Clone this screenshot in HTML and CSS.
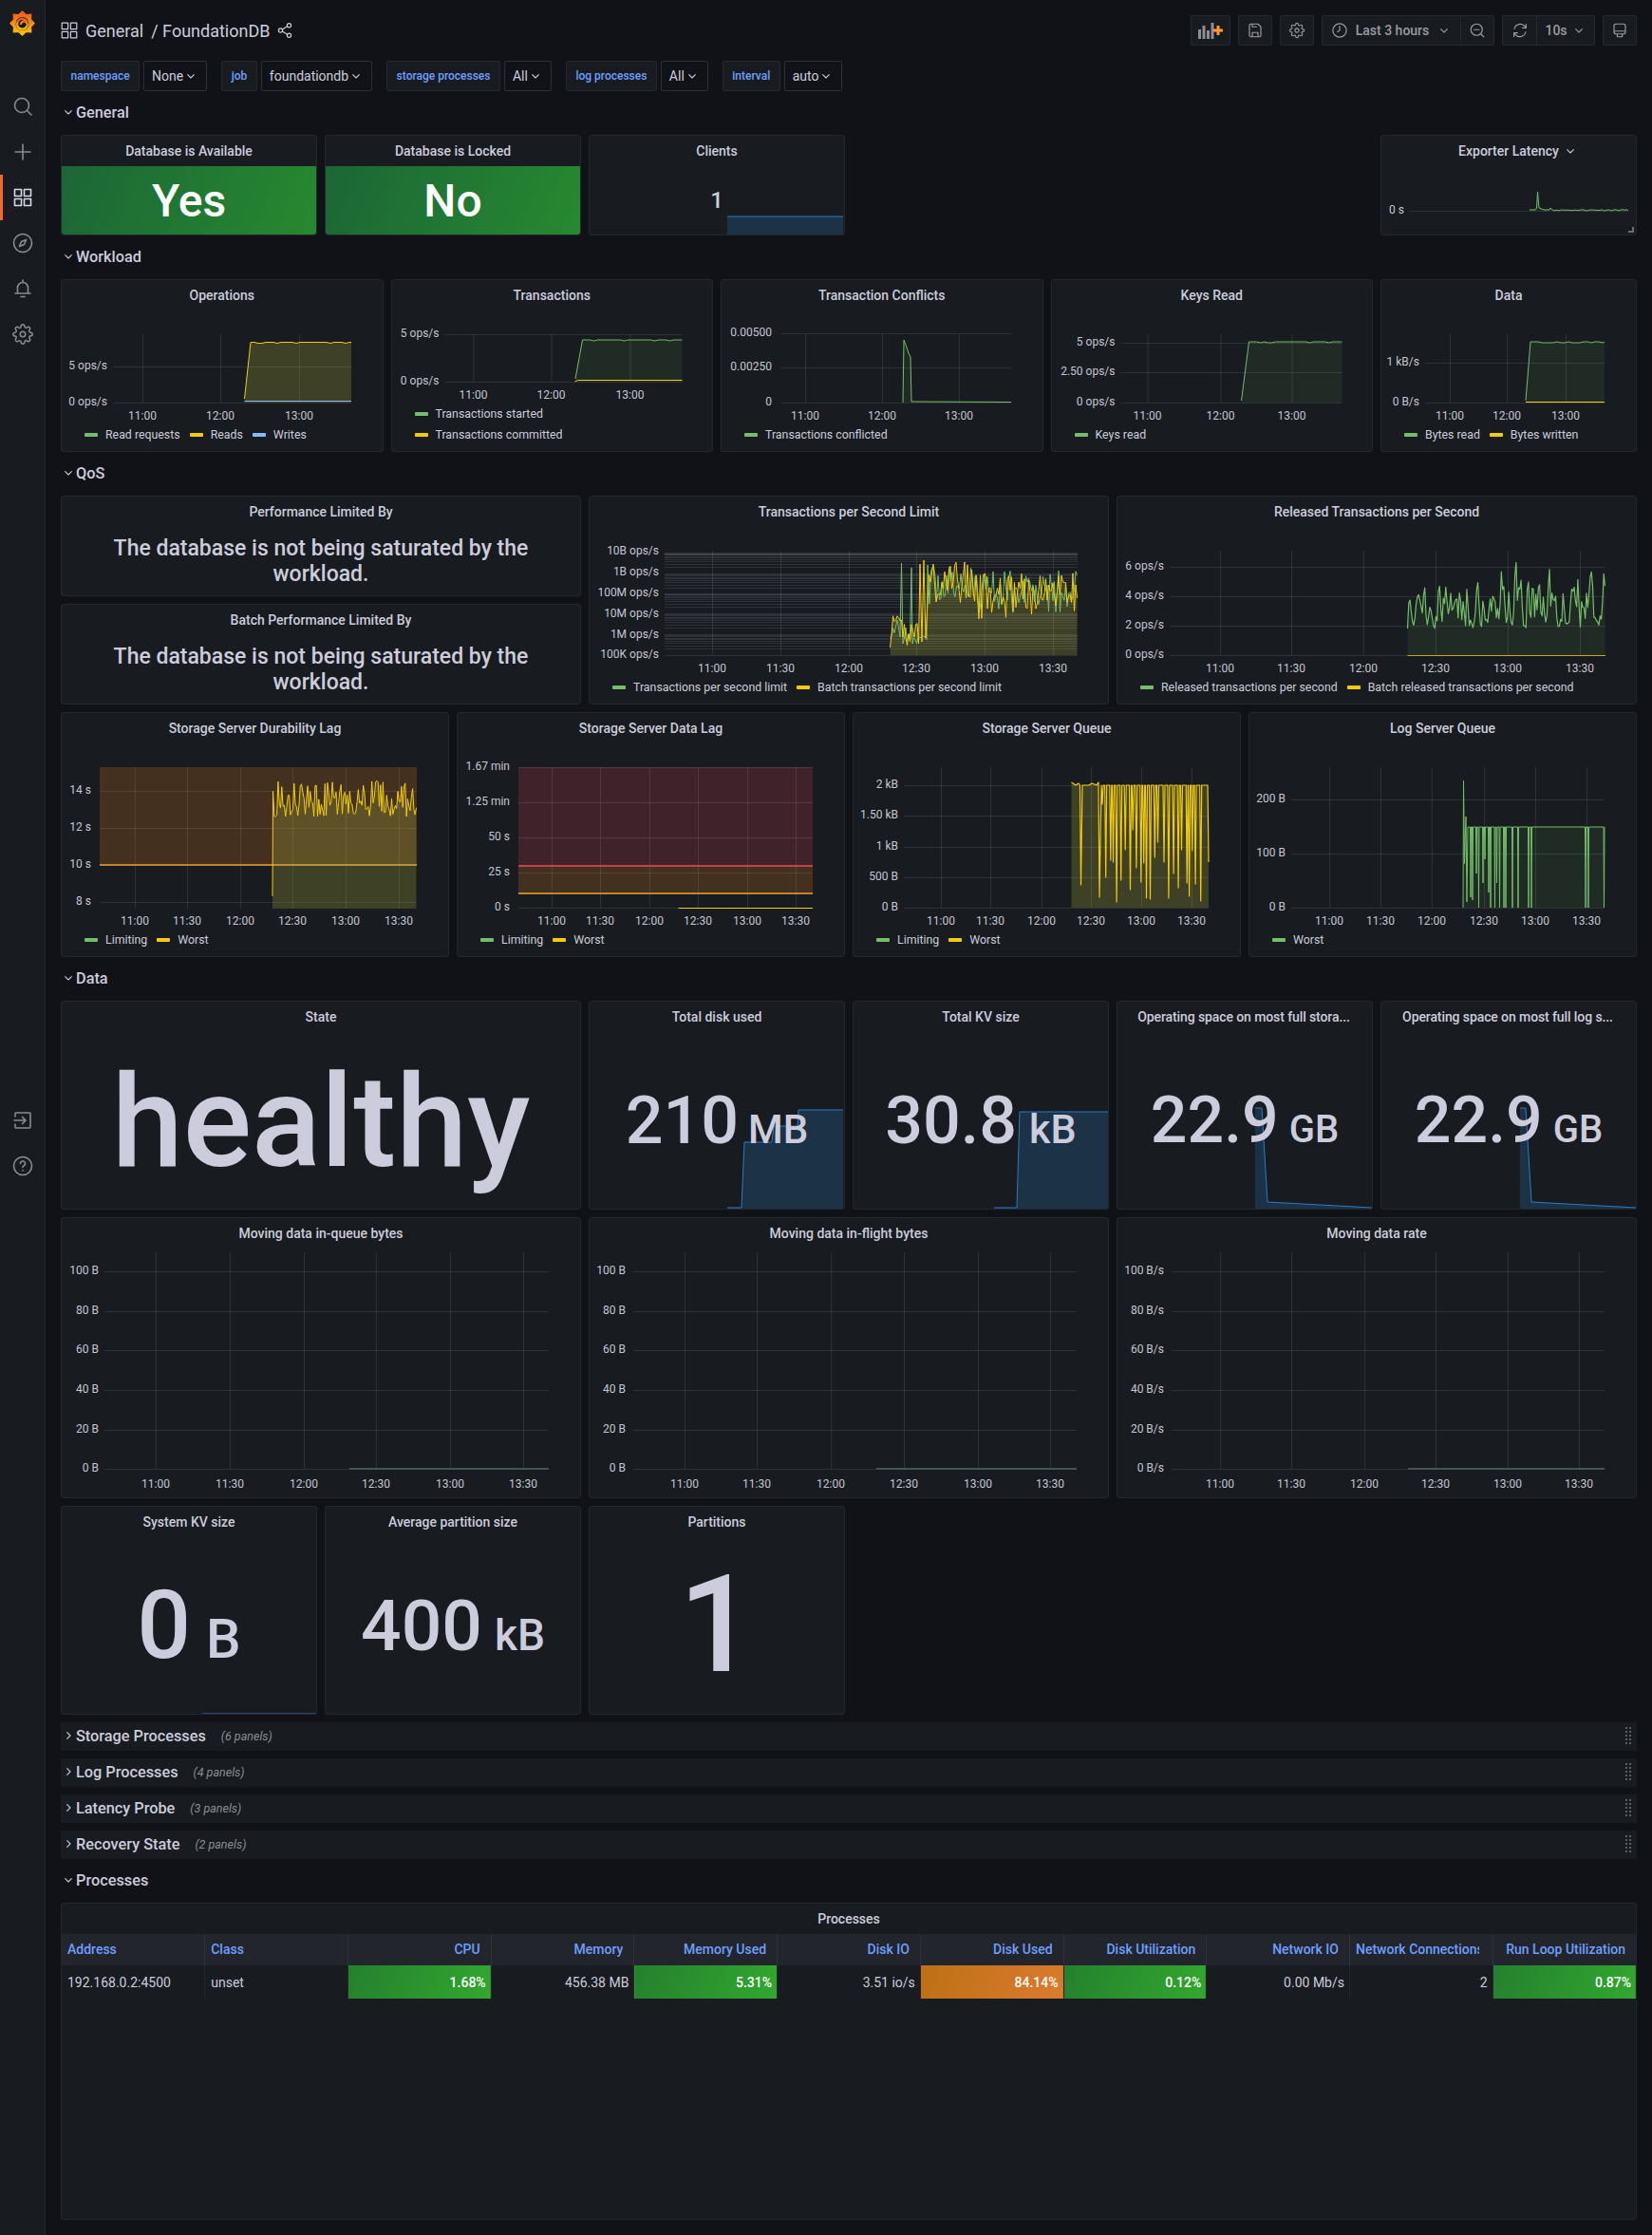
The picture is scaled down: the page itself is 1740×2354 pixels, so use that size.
FILE: index.html
```html
<!DOCTYPE html>
<html>
<head>
  <title>General / FoundationDB - Grafana</title>
  <link rel="stylesheet" href="styles.css">
</head>
<body>

<svg class="sprite" width="0" height="0">
  <defs>
    <linearGradient id="logoFill" x1="0" y1="0" x2="0" y2="1">
      <stop offset="0" stop-color="#f0561f"/>
      <stop offset="1" stop-color="#fbc60a"/>
    </linearGradient>
  </defs>
  <symbol id="i-search" viewBox="0 0 24 24"><circle cx="11" cy="11" r="7.5"/><path d="M16.5 16.5L21 21"/></symbol>
  <symbol id="i-plus" viewBox="0 0 24 24"><path d="M12 4v16M4 12h16"/></symbol>
  <symbol id="i-apps" viewBox="0 0 24 24"><rect x="3.5" y="3.5" width="7" height="7"/><rect x="13.5" y="3.5" width="7" height="7"/><rect x="3.5" y="13.5" width="7" height="7"/><rect x="13.5" y="13.5" width="7" height="7"/></symbol>
  <symbol id="i-compass" viewBox="0 0 24 24"><circle cx="12" cy="12" r="9.5"/><path d="M15.5 8.5l-2 5-5 2 2-5z"/></symbol>
  <symbol id="i-bell" viewBox="0 0 24 24"><path d="M6.5 17v-6a5.5 5.5 0 0 1 11 0v6M4 17h16M10 20.5h4M12 3v2"/></symbol>
  <symbol id="i-cog" viewBox="-1 -1 26 26"><circle cx="12" cy="12" r="3"/><path d="M19.4 15a1.65 1.65 0 0 0 .33 1.82l.06.06a2 2 0 0 1 0 2.83 2 2 0 0 1-2.83 0l-.06-.06a1.65 1.65 0 0 0-1.82-.33 1.65 1.65 0 0 0-1 1.51V21a2 2 0 0 1-2 2 2 2 0 0 1-2-2v-.09A1.65 1.65 0 0 0 9 19.4a1.65 1.65 0 0 0-1.82.33l-.06.06a2 2 0 0 1-2.83 0 2 2 0 0 1 0-2.83l.06-.06a1.65 1.65 0 0 0 .33-1.82 1.65 1.65 0 0 0-1.51-1H3a2 2 0 0 1-2-2 2 2 0 0 1 2-2h.09A1.65 1.65 0 0 0 4.6 9a1.65 1.65 0 0 0-.33-1.82l-.06-.06a2 2 0 0 1 0-2.83 2 2 0 0 1 2.83 0l.06.06a1.65 1.65 0 0 0 1.82.33H9a1.65 1.65 0 0 0 1-1.51V3a2 2 0 0 1 2-2 2 2 0 0 1 2 2v.09a1.65 1.65 0 0 0 1 1.51 1.65 1.65 0 0 0 1.82-.33l.06-.06a2 2 0 0 1 2.83 0 2 2 0 0 1 0 2.83l-.06.06a1.65 1.65 0 0 0-.33 1.82V9a1.65 1.65 0 0 0 1.51 1H21a2 2 0 0 1 2 2 2 2 0 0 1-2 2h-.09a1.65 1.65 0 0 0-1.51 1z"/></symbol>
  <symbol id="i-signin" viewBox="0 0 24 24"><path d="M4 8V5a1 1 0 0 1 1-1h14a1 1 0 0 1 1 1v14a1 1 0 0 1-1 1H5a1 1 0 0 1-1-1v-3M3 12h12M11.5 8.5L15 12l-3.5 3.5"/></symbol>
  <symbol id="i-help" viewBox="0 0 24 24"><circle cx="12" cy="12" r="9.5"/><path d="M9.5 9.5a2.5 2.5 0 1 1 3.6 2.2c-.8.4-1.1.9-1.1 1.8M12 16.5v.5"/></symbol>
  <symbol id="i-share" viewBox="0 0 24 24"><circle cx="18" cy="5" r="2.8"/><circle cx="6" cy="12" r="2.8"/><circle cx="18" cy="19" r="2.8"/><path d="M8.5 10.6l7-4.2M8.5 13.4l7 4.2"/></symbol>
  <symbol id="i-save" viewBox="0 0 24 24"><path d="M7 3h9l4 4v12a2 2 0 0 1-2 2H6a2 2 0 0 1-2-2V5a2 2 0 0 1 2-2zM8 21v-6h8v6M8 3v4h6"/></symbol>
  <symbol id="i-clock" viewBox="0 0 24 24"><circle cx="12" cy="12" r="9.5"/><path d="M12 6v6l-3 2"/></symbol>
  <symbol id="i-zoomout" viewBox="0 0 24 24"><circle cx="11" cy="11" r="8"/><path d="M17 17l4 4M7.5 11h7"/></symbol>
  <symbol id="i-sync" viewBox="0 0 24 24"><path d="M4 10a8.5 8.5 0 0 1 15-3.5l1.5 2M20 14a8.5 8.5 0 0 1-15 3.5L3.5 15.5M20.5 3.5v5h-5M3.5 20.5v-5h5"/></symbol>
  <symbol id="i-tv" viewBox="0 0 24 24"><path d="M7 3h10a3 3 0 0 1 3 3v8a3 3 0 0 1-3 3H7a3 3 0 0 1-3-3V6a3 3 0 0 1 3-3zM4 13h16M8.5 17v4h7v-4"/></symbol>
  <symbol id="i-down" viewBox="0 0 24 24"><path d="M7 10l5 5 5-5"/></symbol>
  <symbol id="i-right" viewBox="0 0 24 24"><path d="M10 7l5 5-5 5"/></symbol>
</svg>

<nav class="sidebar">
  <div class="logo">
    <svg width="27" height="27" viewBox="-1 0 28 28">
      <polygon fill="url(#logoFill)" stroke="url(#logoFill)" stroke-width="1.5" stroke-linejoin="round" points="13,1 16.8,4.8 22.5,4.5 22.2,10.2 26,14 22.2,17.8 22.5,23.5 16.8,23.2 13,27 9.2,23.2 3.5,23.5 3.8,17.8 0,14 3.8,10.2 3.5,4.5 9.2,4.8"/>
      <circle cx="13" cy="14.5" r="7.2" fill="#181b1f"/>
      <path d="M18 12.5A5.6 5.6 0 1 0 17.5 18a3.6 3.6 0 1 0-6-3.6" fill="none" stroke="url(#logoFill)" stroke-width="2.4" stroke-linecap="round"/>
    </svg>
  </div>
  <a class="nav-item"><svg class="icon nav-icon"><use href="#i-search"/></svg></a>
  <a class="nav-item"><svg class="icon nav-icon"><use href="#i-plus"/></svg></a>
  <a class="nav-item active"><svg class="icon nav-icon"><use href="#i-apps"/></svg></a>
  <a class="nav-item"><svg class="icon nav-icon"><use href="#i-compass"/></svg></a>
  <a class="nav-item"><svg class="icon nav-icon"><use href="#i-bell"/></svg></a>
  <a class="nav-item"><svg class="icon nav-icon"><use href="#i-cog"/></svg></a>
  <a class="nav-item nav-bottom"><svg class="icon nav-icon"><use href="#i-signin"/></svg></a>
  <a class="nav-item"><svg class="icon nav-icon"><use href="#i-help"/></svg></a>
</nav>

<div class="main">

  <header class="topbar">
    <svg class="icon icon-apps"><use href="#i-apps"/></svg>
    <span class="crumb">General</span>
    <span class="crumb crumb-sep">/ FoundationDB</span>
    <svg class="icon icon-share"><use href="#i-share"/></svg>
    <div class="toolbar">
      <button class="tool tool-wide">
        <svg width="26" height="18" viewBox="0 0 26 18">
          <g fill="#8e8e96"><rect x="0" y="8" width="3" height="10"/><rect x="4.5" y="4" width="3" height="14"/><rect x="9" y="9" width="3" height="9"/><rect x="13.5" y="1" width="3" height="17"/></g>
          <path d="M21 4v10M16 9h10" stroke="#ff9830" stroke-width="3" fill="none"/>
        </svg>
      </button>
      <button class="tool"><svg class="icon icon-tool"><use href="#i-save"/></svg></button>
      <button class="tool"><svg class="icon icon-tool"><use href="#i-cog"/></svg></button>
      <div class="tool-group">
        <button class="tool-part time-range">
          <svg class="icon icon-tool"><use href="#i-clock"/></svg>
          <span>Last 3 hours</span>
          <svg class="icon icon-chev"><use href="#i-down"/></svg>
        </button>
        <button class="tool-part"><svg class="icon icon-tool"><use href="#i-zoomout"/></svg></button>
      </div>
      <div class="tool-group">
        <button class="tool-part"><svg class="icon icon-tool"><use href="#i-sync"/></svg></button>
        <button class="tool-part refresh-rate">
          <span>10s</span>
          <svg class="icon icon-chev"><use href="#i-down"/></svg>
        </button>
      </div>
      <button class="tool"><svg class="icon icon-tool"><use href="#i-tv"/></svg></button>
    </div>
  </header>

  <div class="filters">
    <div class="filter"><label>namespace</label><div class="filter-value">None<svg class="icon icon-chev"><use href="#i-down"/></svg></div></div>
    <div class="filter"><label>job</label><div class="filter-value">foundationdb<svg class="icon icon-chev"><use href="#i-down"/></svg></div></div>
    <div class="filter"><label>storage processes</label><div class="filter-value">All<svg class="icon icon-chev"><use href="#i-down"/></svg></div></div>
    <div class="filter"><label>log processes</label><div class="filter-value">All<svg class="icon icon-chev"><use href="#i-down"/></svg></div></div>
    <div class="filter"><label>interval</label><div class="filter-value">auto<svg class="icon icon-chev"><use href="#i-down"/></svg></div></div>
  </div>

  <div class="dash">

    <div class="section"><svg class="icon icon-row"><use href="#i-down"/></svg>General</div>

    <div class="panel w4 h3">
      <div class="panel-title">Database is Available</div>
      <div class="panel-fill green-fill">Yes</div>
    </div>
    <div class="panel w4 h3">
      <div class="panel-title">Database is Locked</div>
      <div class="panel-fill green-fill">No</div>
    </div>
    <div class="panel w4 h3">
      <svg class="spark" id="sparkClients"></svg>
      <div class="panel-title">Clients</div>
      <div class="stat"><span class="num-small">1</span></div>
    </div>
    <div class="panel w4 h3 at-21">
      <div class="panel-title title-menu">Exporter Latency<svg class="icon icon-chev title-chev"><use href="#i-down"/></svg></div>
      <svg class="chart" id="exporter"></svg>
      <span class="resize-handle"></span>
    </div>

    <div class="section"><svg class="icon icon-row"><use href="#i-down"/></svg>Workload</div>

    <div class="panel w5 h5">
      <div class="panel-title">Operations</div>
      <svg class="chart" id="operations"></svg>
      <div class="legend">
        <span class="key"><i class="swatch green"></i>Read requests</span>
        <span class="key"><i class="swatch yellow"></i>Reads</span>
        <span class="key"><i class="swatch blue"></i>Writes</span>
      </div>
    </div>
    <div class="panel w5 h5">
      <div class="panel-title">Transactions</div>
      <svg class="chart" id="transactions"></svg>
      <div class="legend"><span class="key"><i class="swatch green"></i>Transactions started</span></div>
      <div class="legend"><span class="key"><i class="swatch yellow"></i>Transactions committed</span></div>
    </div>
    <div class="panel w5 h5">
      <div class="panel-title">Transaction Conflicts</div>
      <svg class="chart" id="conflicts"></svg>
      <div class="legend"><span class="key"><i class="swatch green"></i>Transactions conflicted</span></div>
    </div>
    <div class="panel w5 h5">
      <div class="panel-title">Keys Read</div>
      <svg class="chart" id="keysRead"></svg>
      <div class="legend"><span class="key"><i class="swatch green"></i>Keys read</span></div>
    </div>
    <div class="panel w4 h5">
      <div class="panel-title">Data</div>
      <svg class="chart" id="dataRate"></svg>
      <div class="legend">
        <span class="key"><i class="swatch green"></i>Bytes read</span>
        <span class="key"><i class="swatch yellow"></i>Bytes written</span>
      </div>
    </div>

    <div class="section"><svg class="icon icon-row"><use href="#i-down"/></svg>QoS</div>

    <div class="panel w8 h3">
      <div class="panel-title">Performance Limited By</div>
      <div class="stat message">The database is not being saturated by the workload.</div>
    </div>
    <div class="panel w8 h6">
      <div class="panel-title">Transactions per Second Limit</div>
      <svg class="chart" id="tpsLimit"></svg>
      <div class="legend">
        <span class="key"><i class="swatch green"></i>Transactions per second limit</span>
        <span class="key"><i class="swatch yellow"></i>Batch transactions per second limit</span>
      </div>
    </div>
    <div class="panel w8 h6">
      <div class="panel-title">Released Transactions per Second</div>
      <svg class="chart" id="released"></svg>
      <div class="legend">
        <span class="key"><i class="swatch green"></i>Released transactions per second</span>
        <span class="key"><i class="swatch yellow"></i>Batch released transactions per second</span>
      </div>
    </div>
    <div class="panel w8 h3">
      <div class="panel-title">Batch Performance Limited By</div>
      <div class="stat message">The database is not being saturated by the workload.</div>
    </div>

    <div class="panel w6 h7">
      <div class="panel-title">Storage Server Durability Lag</div>
      <svg class="chart" id="durability"></svg>
      <div class="legend">
        <span class="key"><i class="swatch green"></i>Limiting</span>
        <span class="key"><i class="swatch yellow"></i>Worst</span>
      </div>
    </div>
    <div class="panel w6 h7">
      <div class="panel-title">Storage Server Data Lag</div>
      <svg class="chart" id="dataLag"></svg>
      <div class="legend">
        <span class="key"><i class="swatch green"></i>Limiting</span>
        <span class="key"><i class="swatch yellow"></i>Worst</span>
      </div>
    </div>
    <div class="panel w6 h7">
      <div class="panel-title">Storage Server Queue</div>
      <svg class="chart" id="storageQueue"></svg>
      <div class="legend">
        <span class="key"><i class="swatch green"></i>Limiting</span>
        <span class="key"><i class="swatch yellow"></i>Worst</span>
      </div>
    </div>
    <div class="panel w6 h7">
      <div class="panel-title">Log Server Queue</div>
      <svg class="chart" id="logQueue"></svg>
      <div class="legend"><span class="key"><i class="swatch green"></i>Worst</span></div>
    </div>

    <div class="section"><svg class="icon icon-row"><use href="#i-down"/></svg>Data</div>

    <div class="panel w8 h6">
      <div class="panel-title">State</div>
      <div class="stat stat-state"><span class="num-state">healthy</span></div>
    </div>
    <div class="panel w4 h6">
      <svg class="spark" id="sparkDisk"></svg>
      <div class="panel-title">Total disk used</div>
      <div class="stat"><span class="num">210</span><span class="unit">MB</span></div>
    </div>
    <div class="panel w4 h6">
      <svg class="spark" id="sparkKv"></svg>
      <div class="panel-title">Total KV size</div>
      <div class="stat"><span class="num">30.8</span><span class="unit unit-wide">kB</span></div>
    </div>
    <div class="panel w4 h6">
      <svg class="spark" id="sparkSpace1"></svg>
      <div class="panel-title title-cut">Operating space on most full stora...</div>
      <div class="stat"><span class="num num-gb">22.9</span><span class="unit unit-gb">GB</span></div>
    </div>
    <div class="panel w4 h6">
      <svg class="spark" id="sparkSpace2"></svg>
      <div class="panel-title title-cut">Operating space on most full log s...</div>
      <div class="stat"><span class="num num-gb">22.9</span><span class="unit unit-gb">GB</span></div>
    </div>

    <div class="panel w8 h8">
      <div class="panel-title">Moving data in-queue bytes</div>
      <svg class="chart" id="movingQueue"></svg>
    </div>
    <div class="panel w8 h8">
      <div class="panel-title">Moving data in-flight bytes</div>
      <svg class="chart" id="movingFlight"></svg>
    </div>
    <div class="panel w8 h8">
      <div class="panel-title">Moving data rate</div>
      <svg class="chart" id="movingRate"></svg>
    </div>

    <div class="panel w4 h6">
      <svg class="spark" id="sparkSystem"></svg>
      <div class="panel-title">System KV size</div>
      <div class="stat"><span class="num num-large">0</span><span class="unit unit-large">B</span></div>
    </div>
    <div class="panel w4 h6">
      <div class="panel-title">Average partition size</div>
      <div class="stat"><span class="num num-mid">400</span><span class="unit unit-mid">kB</span></div>
    </div>
    <div class="panel w4 h6">
      <div class="panel-title">Partitions</div>
      <div class="stat"><span class="num-huge">1</span></div>
    </div>

    <div class="section collapsed"><svg class="icon icon-row"><use href="#i-right"/></svg>Storage Processes<em>(6 panels)</em><span class="grip"></span></div>
    <div class="section collapsed"><svg class="icon icon-row"><use href="#i-right"/></svg>Log Processes<em>(4 panels)</em><span class="grip"></span></div>
    <div class="section collapsed"><svg class="icon icon-row"><use href="#i-right"/></svg>Latency Probe<em>(3 panels)</em><span class="grip"></span></div>
    <div class="section collapsed"><svg class="icon icon-row"><use href="#i-right"/></svg>Recovery State<em>(2 panels)</em><span class="grip"></span></div>

    <div class="section"><svg class="icon icon-row"><use href="#i-down"/></svg>Processes</div>

    <div class="panel w24 h9">
      <div class="panel-title">Processes</div>
      <table class="table">
        <thead>
          <tr>
            <th class="left"><div>Address</div></th>
            <th class="left"><div>Class</div></th>
            <th><div>CPU</div></th>
            <th><div>Memory</div></th>
            <th><div>Memory Used</div></th>
            <th><div>Disk IO</div></th>
            <th><div>Disk Used</div></th>
            <th><div>Disk Utilization</div></th>
            <th><div>Network IO</div></th>
            <th class="clip"><div>Network Connections</div></th>
            <th><div>Run Loop Utilization</div></th>
          </tr>
        </thead>
        <tbody>
          <tr>
            <td class="left">192.168.0.2:4500</td>
            <td class="left">unset</td>
            <td class="ok">1.68%</td>
            <td>456.38 MB</td>
            <td class="ok">5.31%</td>
            <td>3.51 io/s</td>
            <td class="warn">84.14%</td>
            <td class="ok">0.12%</td>
            <td>0.00 Mb/s</td>
            <td>2</td>
            <td class="ok">0.87%</td>
          </tr>
        </tbody>
      </table>
    </div>

  </div>
</div>

<script src="charts.js"></script>
</body>
</html>
```

FILE: styles.css
```css
* {
  box-sizing: border-box;
}
body {
  margin: 0;
  display: flex;
  min-height: 2354px;
  background-color: #111217;
  color: #ccccdc;
  font-family: Roboto, "Liberation Sans", sans-serif;
  font-size: 14px;
}
.sprite {
  position: absolute;
}
.icon {
  fill: none;
  stroke: currentColor;
  stroke-width: 1.6;
  stroke-linecap: round;
  stroke-linejoin: round;
  flex: none;
}

/* left nav */
.sidebar {
  width: 48px;
  flex: none;
  background-color: #181b1f;
  border-right: 1px solid #24272c;
  display: flex;
  flex-direction: column;
}
.logo {
  height: 88px;
  padding: 11px 0 0 10px;
}
.nav-item {
  height: 48px;
  display: flex;
  align-items: center;
  justify-content: center;
  color: #8b8c93;
}
.nav-icon {
  width: 24px;
  height: 24px;
}
.nav-item.active {
  color: #d8d9e4;
  border-left: 3px solid #f46a25;
  padding-right: 3px;
}
.nav-bottom {
  margin-top: 780px;
}

.main {
  flex: 1;
  min-width: 0;
  padding: 16px;
}

/* top bar */
.topbar {
  display: flex;
  align-items: center;
  height: 32px;
}
.icon-apps {
  width: 22px;
  height: 22px;
  margin-left: -2px;
  stroke-width: 1.3;
}
.icon-share {
  width: 18px;
  height: 18px;
  margin-left: 7px;
}
.crumb {
  font-size: 18px;
  margin-left: 8px;
}
.crumb:first-of-type {
  margin-left: 6px;
}
.toolbar {
  margin-left: auto;
  display: flex;
  gap: 8px;
}
.tool,
.tool-group {
  height: 32px;
  background-color: #181b1f;
  border: 1px solid #26292f;
  border-radius: 2px;
}
.tool {
  width: 36px;
  display: flex;
  align-items: center;
  justify-content: center;
  padding: 0;
  color: #9a9aa2;
}
.tool-wide {
  width: 42px;
}
.tool-group {
  display: flex;
}
.tool-part {
  width: 35px;
  height: 30px;
  display: flex;
  align-items: center;
  justify-content: center;
  gap: 9px;
  padding: 0;
  border: 0;
  background: none;
  color: #9a9aa2;
  font-family: inherit;
  font-size: 14px;
  font-weight: 500;
  border-left: 1px solid #26292f;
}
.tool-part:first-child {
  border-left: 0;
}
.time-range {
  width: 145px;
  gap: 8px;
}
.refresh-rate {
  width: 61px;
  gap: 4px;
}
.icon-tool {
  width: 18px;
  height: 18px;
}
.icon-chev {
  width: 16px;
  height: 16px;
}

/* template variables */
.filters {
  display: flex;
  gap: 15px;
  margin-top: 16px;
  height: 32px;
}
.filter {
  display: flex;
  gap: 4px;
}
.filter label {
  display: flex;
  align-items: center;
  padding: 0 9.5px;
  background-color: #181b1f;
  border: 1px solid #26292f;
  border-radius: 2px;
  color: #6e9fff;
  font-size: 12px;
  font-weight: 500;
}
.filter-value {
  display: flex;
  align-items: center;
  padding: 0 8px;
  border: 1px solid #2d3036;
  border-radius: 2px;
}

/* dashboard grid */
.dash {
  display: grid;
  grid-template-columns: repeat(24, minmax(0, 1fr));
  grid-auto-rows: 30px;
  gap: 8px;
  margin-top: 8px;
}
.section {
  grid-column: span 24;
  display: flex;
  align-items: center;
  padding-bottom: 2px;
  font-size: 16.3px;
  font-weight: 500;
}
.icon-row {
  width: 16px;
  height: 16px;
}
.section.collapsed {
  background-color: #181b1f;
  padding-right: 5px;
}
.section em {
  margin-left: 16px;
  font-size: 12.5px;
  font-weight: 400;
  color: #8e8e96;
}
.grip {
  margin-left: auto;
  width: 8px;
  height: 20px;
  background-image: radial-gradient(#5a5e67 1.3px, transparent 1.5px);
  background-size: 4px 4px;
}
.w4 { grid-column: span 4; }
.w5 { grid-column: span 5; }
.w6 { grid-column: span 6; }
.w8 { grid-column: span 8; }
.w24 { grid-column: span 24; }
.at-21 { grid-column: 21 / span 4; }
.h3 { grid-row: span 3; }
.h5 { grid-row: span 5; }
.h6 { grid-row: span 6; }
.h7 { grid-row: span 7; }
.h8 { grid-row: span 8; }
.h9 { grid-row: span 9; }

.panel {
  position: relative;
  display: flex;
  flex-direction: column;
  min-width: 0;
  background-color: #181b1f;
  border: 1px solid #24272c;
  border-radius: 3px;
}
.panel-title {
  height: 32px;
  flex: none;
  line-height: 32px;
  text-align: center;
  font-weight: 500;
  position: relative;
  white-space: nowrap;
}
.title-menu {
  padding-left: 20px;
}
.title-cut {
  letter-spacing: -.1px;
  padding-right: 2px;
}
.title-chev {
  vertical-align: -3px;
  margin-left: 4px;
}
.panel-fill {
  flex: 1;
  display: flex;
  align-items: center;
  justify-content: center;
  font-size: 48px;
  font-weight: 500;
  color: #fff;
}
.green-fill {
  background: linear-gradient(110deg, #1c6636, #26892f);
  border-radius: 0 0 3px 3px;
}
.stat {
  position: relative;
  flex: 1;
  display: flex;
  justify-content: center;
  align-items: baseline;
  align-content: center;
  flex-wrap: wrap;
  line-height: 1;
  font-weight: 500;
}
.stat-state {
  padding-top: 4px;
}
.num { font-size: 70px; }
.unit { font-size: 42px; margin-left: 10px; }
.unit-wide { font-size: 43px; margin-left: 13px; }
.num-gb { font-size: 68px; }
.unit-gb { font-size: 40px; margin-left: 11px; }
.num-mid { font-size: 75px; }
.unit-mid { font-size: 46px; margin-left: 13px; }
.num-large { font-size: 100px; }
.unit-large { font-size: 58px; margin-left: 16px; }
.num-small { font-size: 24px; }
.num-huge { font-size: 142px; }
.num-state { font-size: 135px; }
.message {
  font-size: 23px;
  line-height: 27px;
  text-align: center;
  padding: 0 30px;
}

.chart {
  flex: 1;
  min-height: 0;
  width: 100%;
  display: block;
}
.spark {
  position: absolute;
  left: 0;
  top: 0;
  width: 100%;
  height: 100%;
}
.chart text {
  fill: #c6c6d3;
  font-size: 12px;
}
.resize-handle {
  position: absolute;
  right: 2px;
  bottom: 2px;
  width: 6px;
  height: 6px;
  border-right: 2px solid #6b6e75;
  border-bottom: 2px solid #6b6e75;
}

/* legends */
.legend {
  flex: none;
  height: 22px;
  display: flex;
  align-items: center;
  gap: 10px;
  padding-left: 24px;
  font-size: 12.35px;
}
.legend:last-child {
  height: 28px;
  padding-bottom: 6px;
}
.key {
  display: flex;
  align-items: center;
  gap: 8px;
  white-space: nowrap;
}
.swatch {
  width: 14px;
  height: 4px;
  border-radius: 1px;
}
.swatch.green { background-color: #73bf69; }
.swatch.yellow { background-color: #f2cc0c; }
.swatch.blue { background-color: #8ab8ff; }

/* processes table */
.table {
  width: 100%;
  table-layout: fixed;
  border-collapse: collapse;
  font-size: 14px;
}
.table th {
  height: 33px;
  padding: 0 11px 2px 6px;
  background-color: #22252b;
  color: #6e9fff;
  font-weight: 500;
  text-align: right;
  border-right: 1px solid #2f3238;
}
.table th div {
  overflow: hidden;
  white-space: nowrap;
}
.table th.clip {
  padding-right: 14px;
}
.table td {
  height: 35px;
  padding: 0 5px 0 6px;
  text-align: right;
  border-right: 1px solid #24272c;
}
.table th:last-child,
.table td:last-child {
  border-right: 0;
}
.table .left {
  text-align: left;
}
.table .ok {
  background: linear-gradient(110deg, #24802d, #32a72f);
  color: #fff;
  font-weight: 500;
}
.table .warn {
  background: linear-gradient(110deg, #bd7015, #da7a2e);
  color: #fff;
  font-weight: 500;
}
```

FILE: charts.js
```js
const NS = 'http://www.w3.org/2000/svg';
const GREEN = '#73bf69', YELLOW = '#f2cc0c', BLUE = '#8ab8ff', SPARK = '#2d7bc4';
const GREEN_FILL = 'rgba(115,191,105,.1)', OLIVE = 'rgba(180,180,65,.25)', SPARK_FILL = '#1b3247';
const T3 = ['11:00', '12:00', '13:00'];
const T6 = ['11:00', '11:30', '12:00', '12:30', '13:00', '13:30'];

// seeded so the noisy series come out the same every time
function rng(seed) {
  return function () {
    seed = (seed * 16807) % 2147483647;
    return seed / 2147483647;
  };
}

function add(svg, tag, attrs, text) {
  const el = document.createElementNS(NS, tag);
  for (const k in attrs) el.setAttribute(k, attrs[k]);
  if (text) el.textContent = text;
  svg.appendChild(el);
  return el;
}

function toPoints(pts) {
  return pts.map(p => p[0] + ',' + p[1]).join(' ');
}

// all chart coordinates are page pixels, so the viewBox is the svg's place on the page
function place(id) {
  const svg = document.getElementById(id);
  const r = svg.getBoundingClientRect();
  svg.setAttribute('viewBox', r.left + ' ' + r.top + ' ' + r.width + ' ' + r.height);
  return svg;
}

function drawSeries(svg, series, bottom) {
  series.forEach(s => {
    if (s.fill) {
      const first = s.pts[0], last = s.pts[s.pts.length - 1];
      const area = [[first[0], bottom]].concat(s.pts, [[last[0], bottom]]);
      add(svg, 'polygon', { points: toPoints(area), fill: s.fill });
    }
  });
  series.forEach(s => {
    add(svg, 'polyline', { points: toPoints(s.pts), fill: 'none', stroke: s.color, 'stroke-width': s.width || 1, 'stroke-linejoin': 'round' });
  });
}

function chart(id, c) {
  const svg = place(id);
  const hl = c.hlines || c.y.map(t => t[1]);
  (c.bands || []).forEach(b => {
    add(svg, 'rect', { x: c.x0, y: b.top, width: c.x1 - c.x0, height: b.bottom - b.top, fill: b.fill });
  });
  hl.forEach(y => {
    add(svg, 'line', { x1: c.x0, x2: c.x1, y1: y + .5, y2: y + .5, stroke: 'rgba(204,204,220,.13)' });
  });
  (c.x || []).forEach(x => {
    add(svg, 'line', { x1: x + .5, x2: x + .5, y1: c.top, y2: c.bottom, stroke: 'rgba(204,204,220,.13)' });
  });
  (c.bands || []).forEach(b => {
    if (b.line) add(svg, 'line', { x1: c.x0, x2: c.x1, y1: b.bottom, y2: b.bottom, stroke: b.line, 'stroke-width': 2 });
  });
  drawSeries(svg, c.series, c.bottom);
  c.y.forEach(t => {
    add(svg, 'text', { x: c.labelX, y: t[1] + 3, 'text-anchor': 'end' }, t[0]);
  });
  (c.x || []).forEach((x, i) => {
    add(svg, 'text', { x: x, y: c.timeY + 4, 'text-anchor': 'middle' }, c.times[i]);
  });
}

function spark(id, pts, bottom) {
  drawSeries(place(id), [{ pts: pts, color: SPARK, fill: SPARK_FILL }], bottom);
}

function noise(seed, x0, x1, step, lo, hi, power) {
  const r = rng(seed), pts = [];
  for (let x = x0; x <= x1; x += step) {
    pts.push([+x.toFixed(1), +(hi - (hi - lo) * Math.pow(r(), power || 1)).toFixed(1)]);
  }
  return pts;
}

// same noise, averaged with the point before so the line looks less like a comb
function smoothed(pts) {
  return pts.map((p, i) => i ? [p[0], +((p[1] * 2 + pts[i - 1][1]) / 3).toFixed(1)] : p);
}

function plateau(x0, x1, x2, yStart, yTop, seed) {
  const r = rng(seed), pts = [[x0, yStart], [x1, yTop]];
  for (let x = x1 + 4; x < x2; x += 4) pts.push([x, yTop + (r() > .75 ? 1 : 0)]);
  pts.push([x2, yTop]);
  return pts;
}

function flat(x0, x1, y) {
  return [[x0, y], [x1, y]];
}

/* General */
spark('sparkClients', flat(766, 888, 228), 247);

chart('exporter', {
  x0: 1484, x1: 1715, top: 202, bottom: 222, labelX: 1479,
  y: [['0 s', 222]],
  series: [{
    color: GREEN, fill: GREEN_FILL,
    pts: [[1611, 221], [1617, 221], [1618.5, 219], [1619.5, 202], [1621, 219], [1626, 221], [1632, 221], [1633, 219], [1635, 221]]
      .concat(noise(11, 1637, 1715, 2, 220.5, 222))
  }]
});

/* Workload */
chart('operations', {
  x0: 119, x1: 370, top: 352, bottom: 424, labelX: 113, timeY: 438, times: T3,
  x: [150, 232, 315],
  y: [['5 ops/s', 386], ['0 ops/s', 424]],
  series: [
    { color: YELLOW, fill: OLIVE, pts: plateau(257.5, 264, 370, 420, 360.5, 21) },
    { color: BLUE, pts: flat(257.5, 370, 422.5) }
  ]
});
chart('transactions', {
  x0: 468, x1: 718, top: 352, bottom: 402, labelX: 462, timeY: 416, times: T3,
  x: [498, 580, 663],
  y: [['5 ops/s', 352], ['0 ops/s', 402]],
  series: [
    { color: GREEN, fill: GREEN_FILL, pts: plateau(605.5, 613, 718, 399, 358, 5) },
    { color: YELLOW, pts: [[605, 402], [608, 400.5], [718, 400.5]] }
  ]
});
chart('conflicts', {
  x0: 823, x1: 1065, top: 352, bottom: 424, labelX: 813, timeY: 438, times: T3,
  x: [848, 929, 1010],
  y: [['0.00500', 351], ['0.00250', 387], ['0', 424]],
  series: [
    { color: GREEN, fill: GREEN_FILL, pts: [[951, 424], [952, 358], [955, 366], [957, 372], [959, 376], [960, 423], [1065, 423.5]] }
  ]
});
chart('keysRead', {
  x0: 1180, x1: 1413, top: 352, bottom: 424, labelX: 1174, timeY: 438, times: T3,
  x: [1208, 1285, 1360],
  y: [['5 ops/s', 361], ['2.50 ops/s', 392], ['0 ops/s', 424]],
  series: [
    { color: GREEN, fill: GREEN_FILL, pts: plateau(1307, 1315, 1413, 422, 360, 9) }
  ]
});
chart('dataRate', {
  x0: 1501, x1: 1690, top: 352, bottom: 424, labelX: 1495, timeY: 438, times: T3,
  x: [1527, 1587, 1649],
  y: [['1 kB/s', 382], ['0 B/s', 424]],
  series: [
    { color: GREEN, fill: GREEN_FILL, pts: plateau(1607, 1612, 1690, 422, 360, 13) },
    { color: YELLOW, pts: flat(1607, 1690, 423.5) }
  ]
});

/* QoS */
const decades = [690, 668, 646, 626, 604, 582];
const logLines = [];
decades.slice(0, 5).forEach(y => {
  for (let k = 1; k <= 9; k++) logLines.push(Math.round(y - 21.7 * Math.log10(k)));
});
logLines.push(582, 583, 584);
chart('tpsLimit', {
  x0: 700, x1: 1135, top: 580, bottom: 690, labelX: 694, timeY: 704, times: T6,
  x: [750, 822, 894, 965, 1037, 1109], hlines: logLines,
  y: [['10B ops/s', 581], ['1B ops/s', 603], ['100M ops/s', 625], ['10M ops/s', 647], ['1M ops/s', 669], ['100K ops/s', 690]],
  series: [
    {
      color: GREEN,
      pts: noise(31, 937.5, 949, 1.5, 648, 672).concat([[949.5, 593]], noise(33, 951, 959, 1.5, 660, 678), [[960, 598]], noise(35, 961, 976, 1.5, 668, 678), [[977, 595]],
        noise(37, 979, 1030, 1.5, 596, 636), noise(39, 1031, 1134.5, 1.5, 600, 645))
    },
    {
      color: YELLOW, fill: OLIVE,
      pts: noise(41, 937.5, 968, 1.5, 648, 682).concat([[969, 594], [971, 676], [973, 590], [975, 672]],
        noise(43, 977, 1030, 1.5, 590, 635), noise(45, 1031, 1134.5, 1.5, 603, 652, .7))
    }
  ]
});
chart('released', {
  x0: 1232, x1: 1691, top: 580, bottom: 690, labelX: 1226, timeY: 704, times: T6,
  x: [1285, 1360, 1436, 1512, 1588, 1664],
  y: [['6 ops/s', 597], ['4 ops/s', 628], ['2 ops/s', 659], ['0 ops/s', 690]],
  series: [
    { color: GREEN, fill: GREEN_FILL, width: 1.2, pts: smoothed(noise(51, 1482.5, 1691, 1.3, 590, 662, 1.7)) },
    { color: '#c9aa14', pts: flat(1482.5, 1691, 690.5) }
  ]
});

chart('durability', {
  x0: 105, x1: 439, top: 808, bottom: 957, labelX: 96, timeY: 970, times: T6,
  x: [142, 197, 253, 308, 364, 420],
  y: [['14 s', 833], ['12 s', 872], ['10 s', 911], ['8 s', 950]],
  bands: [{ top: 808, bottom: 911, fill: '#43301f', line: '#c6802e' }],
  series: [
    { color: YELLOW, fill: OLIVE, pts: [[287, 944], [287.5, 833]].concat(noise(61, 289, 439, 1.3, 822, 860, 1.4)) }
  ]
});
chart('dataLag', {
  x0: 546, x1: 856, top: 808, bottom: 956, labelX: 537, timeY: 970, times: T6,
  x: [581, 632, 684, 735, 787, 838],
  y: [['1.67 min', 808], ['1.25 min', 845], ['50 s', 882], ['25 s', 919], ['0 s', 956]],
  bands: [
    { top: 808, bottom: 912, fill: '#40232a', line: '#c4404f' },
    { top: 912, bottom: 941, fill: '#43301f', line: '#c6802e' }
  ],
  series: [{ color: YELLOW, pts: flat(714.5, 856, 956.5) }]
});

// the queue sits at its 2 kB ceiling and keeps dropping at uneven gaps
const queueRandom = rng(71);
const queuePts = [[1128.5, 824], [1133, 827], [1136, 825], [1137.5, 827], [1138.5, 932], [1140, 827], [1147, 827], [1150, 825], [1155, 827], [1157, 824], [1158, 945]];
for (let x = 1160; x < 1266;) {
  const low = Math.round(845 + Math.pow(queueRandom(), .5) * 105);
  queuePts.push([+x.toFixed(1), 827], [+(x + 1).toFixed(1), low], [+(x + 2).toFixed(1), 827]);
  x += 2.4 + queueRandom() * queueRandom() * 6;
}
queuePts.push([1272, 827], [1273, 908]);
chart('storageQueue', {
  x0: 952, x1: 1273, top: 808, bottom: 956, labelX: 946, timeY: 970, times: T6,
  x: [991, 1043, 1097, 1149, 1202, 1255],
  y: [['2 kB', 827], ['1.50 kB', 859], ['1 kB', 892], ['500 B', 924], ['0 B', 956]],
  series: [{ color: YELLOW, fill: OLIVE, width: 1.2, pts: queuePts }]
});

const logPts = [[1541, 956], [1541.5, 822], [1542.5, 910], [1544, 860], [1545, 950], [1546, 871]];
[[1549, 945], [1551, 948], [1555, 920], [1557.5, 956], [1562, 930], [1564, 905], [1568, 940], [1570, 956], [1574.5, 956], [1576.5, 930], [1579.5, 956], [1584, 956], [1586, 956], [1593, 956], [1599, 956], [1610, 956], [1613, 956], [1670, 956], [1673, 956], [1689.5, 956]].forEach(d => {
  logPts.push([d[0] - .5, 871], [d[0], d[1]], [d[0] + .5, 871]);
});
chart('logQueue', {
  x0: 1360, x1: 1690, top: 808, bottom: 956, labelX: 1354, timeY: 970, times: T6,
  x: [1400, 1454, 1508, 1563, 1617, 1671],
  y: [['200 B', 842], ['100 B', 899], ['0 B', 956]],
  series: [{ color: GREEN, fill: GREEN_FILL, pts: logPts }]
});

/* Data */
spark('sparkDisk', [[766, 1272], [781, 1272], [784, 1203], [813, 1203], [815, 1186], [840, 1186], [841, 1169], [888, 1169]], 1273);
spark('sparkKv', [[1047, 1272], [1071, 1272], [1074, 1171], [1167, 1171]], 1273);
spark('sparkSpace1', [[1322, 1167], [1329, 1167], [1335, 1266], [1445, 1272]], 1273);
spark('sparkSpace2', [[1601, 1167], [1607, 1167], [1613, 1266], [1723, 1272]], 1273);
spark('sparkSystem', flat(213, 333, 1805), 1805.5);

const movingY = [['100', 1339], ['80', 1381], ['60', 1422], ['40', 1464], ['20', 1506], ['0', 1547]];
function moving(id, unit, x0, x1, labelX, xs, start) {
  chart(id, {
    x0: x0, x1: x1, top: 1319, bottom: 1547, labelX: labelX, timeY: 1562.5, times: T6, x: xs,
    y: movingY.map(t => [t[0] + ' ' + unit, t[1]]),
    series: [{ color: '#55645a', width: 1.5, pts: flat(start, x1, 1547) }]
  });
}
moving('movingQueue', 'B', 110, 578, 104, [164, 242, 320, 396, 474, 551], 368);
moving('movingFlight', 'B', 667, 1134, 659, [721, 797, 875, 952, 1030, 1106], 923);
moving('movingRate', 'B/s', 1234, 1690, 1226, [1285, 1360, 1437, 1512, 1588, 1663], 1483);
```
